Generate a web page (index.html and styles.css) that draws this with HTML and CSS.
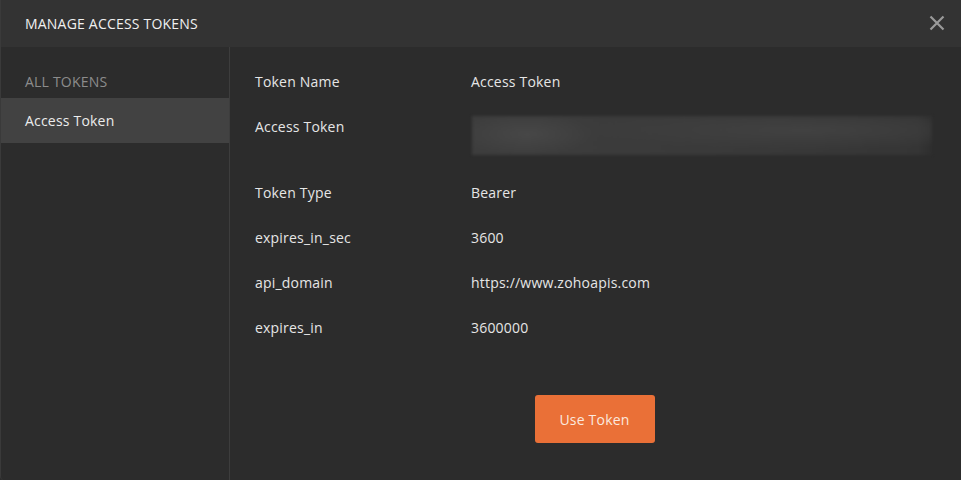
FILE: index.html
```html
<!DOCTYPE html>
<html lang="en">
<head>
	<title>Manage Access Tokens</title>
	<link rel="stylesheet" href="styles.css">
</head>
<body>
	<div class="modal">
		<header class="modal-header">
			<h1>MANAGE ACCESS TOKENS</h1>
			<button class="close" aria-label="Close">
				<svg width="16" height="16" viewBox="0 0 16 16"><path d="M1.5 1.5 L14.5 14.5 M14.5 1.5 L1.5 14.5" stroke="#9a9a9a" stroke-width="2.2" fill="none"/></svg>
			</button>
		</header>
		<div class="modal-body">
			<aside class="sidebar">
				<p class="sidebar-title">ALL TOKENS</p>
				<ul class="token-list">
					<li class="active">Access Token</li>
				</ul>
			</aside>
			<main class="details">
				<div class="row">
					<div class="label">Token Name</div>
					<div class="value">Access Token</div>
				</div>
				<div class="row">
					<div class="label">Access Token</div>
					<div class="value"><div class="token-blur"></div></div>
				</div>
				<div class="row">
					<div class="label">Token Type</div>
					<div class="value">Bearer</div>
				</div>
				<div class="row">
					<div class="label">expires_in_sec</div>
					<div class="value">3600</div>
				</div>
				<div class="row">
					<div class="label">api_domain</div>
					<div class="value">https://www.zohoapis.com</div>
				</div>
				<div class="row">
					<div class="label">expires_in</div>
					<div class="value">3600000</div>
				</div>
				<div class="actions">
					<button class="use-token">Use Token</button>
				</div>
			</main>
		</div>
	</div>
</body>
</html>
```

FILE: styles.css
```css
html, body {
	margin: 0;
	height: 100%;
	background-color: #2c2c2c;
}
body {
	font-family: "Open Sans", "Liberation Sans", sans-serif;
	font-size: 14px;
	letter-spacing: 0.2px;
	color: #e6e6e6;
	overflow: hidden;
}
.modal {
	height: 480px;
	display: flex;
	flex-direction: column;
	background-color: #2c2c2c;
	border-left: 1px solid #3a3a3a;
	border-bottom-left-radius: 4px;
	box-sizing: border-box;
}
.modal-header {
	height: 47px;
	flex: none;
	display: flex;
	align-items: center;
	justify-content: space-between;
	background-color: #333333;
	padding: 0 16px 0 24px;
}
.modal-header h1 {
	margin: 0;
	font-size: 14px;
	font-weight: normal;
	color: #f0f0f0;
}
.close {
	background: none;
	border: none;
	padding: 0;
	width: 16px;
	height: 16px;
	margin-top: -1px;
	cursor: pointer;
}
.modal-body {
	flex: 1;
	display: flex;
}
.sidebar {
	width: 228px;
	flex: none;
	border-right: 1px solid #3d3d3d;
}
.sidebar-title {
	margin: 0;
	padding: 25px 24px 0;
	height: 26px;
	line-height: 20px;
	color: #8c8c8c;
}
.token-list {
	list-style: none;
	margin: 0;
	padding: 0;
}
.token-list li {
	height: 45px;
	line-height: 45px;
	padding: 0 24px;
	color: #ececec;
}
.token-list li.active {
	background-color: #424242;
}
.details {
	flex: 1;
	padding: 25px 29px 0 25px;
}
.row {
	display: flex;
	line-height: 20px;
	margin-bottom: 25px;
}
.label {
	width: 216px;
	flex: none;
	color: #e6e6e6;
}
.value {
	flex: 1;
	color: #e6e6e6;
}
.token-blur {
	height: 39px;
	margin-bottom: 3px;
	margin-top: -1px;
	margin-left: 1px;
	background:
		radial-gradient(ellipse 70px 22px at 55px 18px, #474747, rgba(71,71,71,0) 100%),
		radial-gradient(ellipse 220px 20px at 330px 14px, #414141, rgba(65,65,65,0) 100%),
		linear-gradient(to right, #3d3d3d, #393939 60%, #353535 97%, #2e2e2e);
	filter: blur(1.5px);
}
.actions {
	display: flex;
	justify-content: center;
	padding-top: 32px;
}
.use-token {
	width: 120px;
	height: 48px;
	margin-left: 2px;
	border: none;
	border-radius: 3px;
	background-color: #ea7037;
	color: #fbe9df;
	font-family: "Open Sans", "Liberation Sans", sans-serif;
	font-size: 14px;
	letter-spacing: 0.2px;
	cursor: pointer;
}
```
